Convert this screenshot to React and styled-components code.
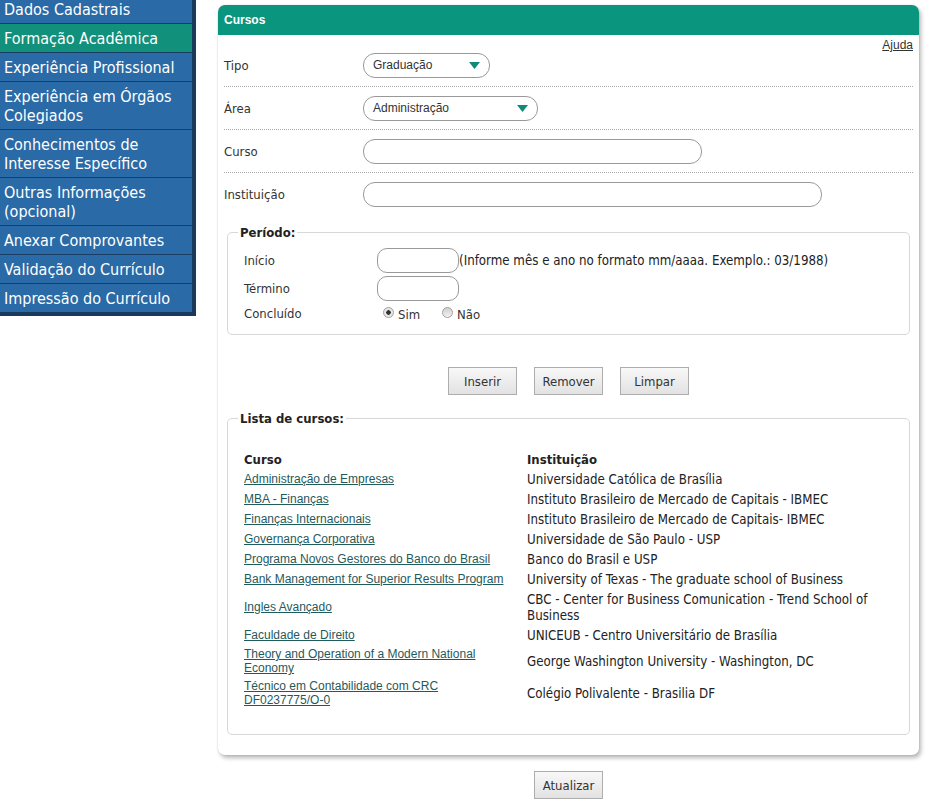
import React from 'react'
import styled, { createGlobalStyle } from 'styled-components'

const GlobalStyle = createGlobalStyle`
  body {
    margin: 0;
    background: #fff;
    font-family: "DejaVu Sans Condensed", "DejaVu Sans", sans-serif;
    color: #333;
  }
`

const menu = [
  { label: 'Dados Cadastrais' },
  { label: 'Formação Acadêmica', active: true },
  { label: 'Experiência Profissional' },
  { label: 'Experiência em Órgãos Colegiados' },
  { label: 'Conhecimentos de Interesse Específico' },
  { label: 'Outras Informações (opcional)' },
  { label: 'Anexar Comprovantes' },
  { label: 'Validação do Currículo' },
  { label: 'Impressão do Currículo' },
]

const cursos = [
  ['Administração de Empresas', 'Universidade Católica de Brasília'],
  ['MBA - Finanças', 'Instituto Brasileiro de Mercado de Capitais - IBMEC'],
  ['Finanças Internacionais', 'Instituto Brasileiro de Mercado de Capitais- IBMEC'],
  ['Governança Corporativa', 'Universidade de São Paulo - USP'],
  ['Programa Novos Gestores do Banco do Brasil', 'Banco do Brasil e USP'],
  ['Bank Management for Superior Results Program', 'University of Texas - The graduate school of Business'],
  ['Ingles Avançado', 'CBC - Center for Business Comunication - Trend School of Business'],
  ['Faculdade de Direito', 'UNICEUB - Centro Universitário de Brasília'],
  ['Theory and Operation of a Modern National Economy', 'George Washington University - Washington, DC'],
  ['Técnico em Contabilidade com CRC DF0237775/O-0', 'Colégio Polivalente - Brasilia DF'],
]

const Arrow = () => (
  <svg width="11" height="7" viewBox="0 0 11 7">
    <path d="M0 0 L11 0 L5.5 7 Z" fill="#0e8a77" />
  </svg>
)

const App = () => {
  return (
    <Page>
      <GlobalStyle />
      <Sidebar>
        {menu.map((m) => (
          <MenuItem key={m.label} $active={m.active}>
            {m.label}
          </MenuItem>
        ))}
      </Sidebar>

      <Main>
        <Panel>
          <PanelHeader>Cursos</PanelHeader>
          <PanelBody>
            <HelpBar>
              <Help href="#">Ajuda</Help>
            </HelpBar>
            <FormRow>
              <Label>Tipo</Label>
              <Select $width={127}>
                <span>Graduação</span>
                <Arrow />
              </Select>
            </FormRow>
            <FormRow>
              <Label>Área</Label>
              <Select $width={175}>
                <span>Administração</span>
                <Arrow />
              </Select>
            </FormRow>
            <FormRow>
              <Label>Curso</Label>
              <TextInput $width={339} />
            </FormRow>
            <FormRow $last>
              <Label>Instituição</Label>
              <TextInput $width={459} />
            </FormRow>

            <Fieldset>
              <Legend>Período:</Legend>
              <PeriodRow>
                <PeriodLabel>Início</PeriodLabel>
                <SmallInput />
                <Hint>(Informe mês e ano no formato mm/aaaa. Exemplo.: 03/1988)</Hint>
              </PeriodRow>
              <PeriodRow>
                <PeriodLabel>Término</PeriodLabel>
                <SmallInput />
              </PeriodRow>
              <PeriodRow $short>
                <PeriodLabel>Concluído</PeriodLabel>
                <RadioOption>
                  <Radio $checked />
                  Sim
                </RadioOption>
                <RadioOption>
                  <Radio />
                  Não
                </RadioOption>
              </PeriodRow>
            </Fieldset>

            <Actions>
              <Button>Inserir</Button>
              <Button>Remover</Button>
              <Button>Limpar</Button>
            </Actions>

            <ListFieldset>
              <Legend>Lista de cursos:</Legend>
              <Table>
                <thead>
                  <tr>
                    <Th>Curso</Th>
                    <Th>Instituição</Th>
                  </tr>
                </thead>
                <tbody>
                  {cursos.map(([c, i]) => (
                    <tr key={c}>
                      <CourseCell>
                        <CourseLink href="#">{c}</CourseLink>
                      </CourseCell>
                      <InstCell>{i}</InstCell>
                    </tr>
                  ))}
                </tbody>
              </Table>
            </ListFieldset>
          </PanelBody>
        </Panel>
        <Footer>
          <Button>Atualizar</Button>
        </Footer>
      </Main>
    </Page>
  )
}

const Page = styled.div`
  display: flex;
  align-items: flex-start;
`

const Sidebar = styled.nav`
  width: 192px;
  margin-top: -5px;
  background: #1a3e63;
  border-right: 4px solid #1a3a5c;
  border-bottom: 4px solid #1a3a5c;
  display: flex;
  flex-direction: column;
  gap: 1px;
`

const MenuItem = styled.a`
  display: block;
  padding: 5px 4px 4px;
  background: ${(p) => (p.$active ? '#11907c' : '#2a6aa6')};
  color: #fff;
  font-size: 16px;
  line-height: 19px;
  text-decoration: none;
  cursor: pointer;
`

const Main = styled.div`
  margin-left: 22px;
  width: 701px;
  display: flex;
  flex-direction: column;
`

const Panel = styled.section`
  margin-top: 5px;
  background: #fff;
  border-radius: 7px;
  box-shadow: 0 0 2px rgba(0, 0, 0, 0.12), 2px 3px 4px rgba(0, 0, 0, 0.28);
`

const PanelHeader = styled.h2`
  margin: 0;
  height: 30px;
  line-height: 30px;
  padding-left: 6px;
  background: #0a957f;
  border-radius: 7px 7px 0 0;
  color: #fff;
  font-family: "Liberation Sans", Arial, sans-serif;
  font-size: 12px;
  font-weight: bold;
`

const PanelBody = styled.div`
  padding: 9px 6px 20px;
`

const HelpBar = styled.div`
  height: 0;
  text-align: right;
  line-height: 14px;
  position: relative;
  top: -7px;
`

const Help = styled.a`
  color: #333;
  font-family: "Liberation Sans", Arial, sans-serif;
  font-size: 12px;
  text-decoration: underline;
`

const FormRow = styled.div`
  display: flex;
  align-items: center;
  height: 42px;
  border-bottom: ${(p) => (p.$last ? 'none' : '1px dotted #aaa')};
`

const Label = styled.span`
  width: 139px;
  font-size: 13px;
  color: #333;
`

const Select = styled.div`
  box-sizing: border-box;
  width: ${(p) => p.$width}px;
  height: 25px;
  padding: 0 9px 0 9px;
  border: 1px solid #999;
  border-radius: 12px;
  display: flex;
  align-items: center;
  justify-content: space-between;
  font-family: "Liberation Sans", Arial, sans-serif;
  font-size: 12px;
  color: #333;
`

const TextInput = styled.input`
  box-sizing: border-box;
  width: ${(p) => p.$width}px;
  height: 25px;
  border: 1px solid #999;
  border-radius: 12px;
  background: #fff;
  outline: none;
  margin: 0;
`

const Fieldset = styled.fieldset`
  margin: 10px 3px 0;
  padding: 6px 16px 10px;
  border: 1px solid #d8d8d8;
  border-radius: 5px;
`

const ListFieldset = styled(Fieldset)`
  margin-top: 16px;
  padding: 24px 16px 24px;
`

const Legend = styled.legend`
  padding: 0 2px;
  margin-left: -6px;
  font-size: 13px;
  font-weight: bold;
  color: #222;
`

const PeriodRow = styled.div`
  display: flex;
  align-items: center;
  height: ${(p) => (p.$short ? '22px' : '28px')};
`

const PeriodLabel = styled.span`
  width: 133px;
  font-size: 13px;
  color: #333;
`

const SmallInput = styled.input`
  box-sizing: border-box;
  width: 82px;
  height: 25px;
  border: 1px solid #999;
  border-radius: 10px;
  background: #fff;
  outline: none;
  margin: 0;
`

const Hint = styled.span`
  font-size: 13.2px;
  color: #222;
`

const RadioOption = styled.label`
  display: flex;
  align-items: center;
  gap: 4px;
  margin-left: 6px;
  margin-right: 16px;
  font-size: 13px;
  color: #333;
  padding-top: 2px;
`

const Radio = styled.span`
  display: inline-block;
  box-sizing: border-box;
  width: 11px;
  height: 11px;
  border-radius: 50%;
  border: 1px solid #a0a0a0;
  background: ${(p) =>
    p.$checked
      ? 'radial-gradient(circle, #333 0 2px, #e6e6e6 2.5px)'
      : 'linear-gradient(#d0d0d0, #f2f2f2)'};
  margin-top: -3px;
`

const Actions = styled.div`
  display: flex;
  justify-content: center;
  gap: 17px;
  margin-top: 32px;
`

const Button = styled.button`
  box-sizing: border-box;
  width: 69px;
  height: 28px;
  padding: 0;
  border: 1px solid #adadad;
  background: linear-gradient(#f8f8f8, #e2e2e2);
  color: #333;
  font-family: "DejaVu Sans Condensed", "DejaVu Sans", sans-serif;
  font-size: 13px;
  cursor: pointer;
`

const Table = styled.table`
  border-collapse: collapse;
  width: 628px;
`

const Th = styled.th`
  text-align: left;
  padding: 2px 0;
  font-size: 13px;
  font-weight: bold;
  color: #222;
  line-height: 16px;
  &:first-child {
    width: 283px;
  }
`

const CourseCell = styled.td`
  padding: 2px 8px 2px 0;
  vertical-align: middle;
  font-family: "Liberation Sans", Arial, sans-serif;
  font-size: 12px;
  line-height: 14px;
`

const CourseLink = styled.a`
  position: relative;
  top: -1px;
  color: #1f5a5c;
  text-decoration: underline;
`

const InstCell = styled.td`
  padding: 2px 0;
  vertical-align: middle;
  font-size: 13.2px;
  line-height: 16px;
  color: #222;
`

const Footer = styled.div`
  display: flex;
  justify-content: center;
  margin-top: 16px;
`

export default App
